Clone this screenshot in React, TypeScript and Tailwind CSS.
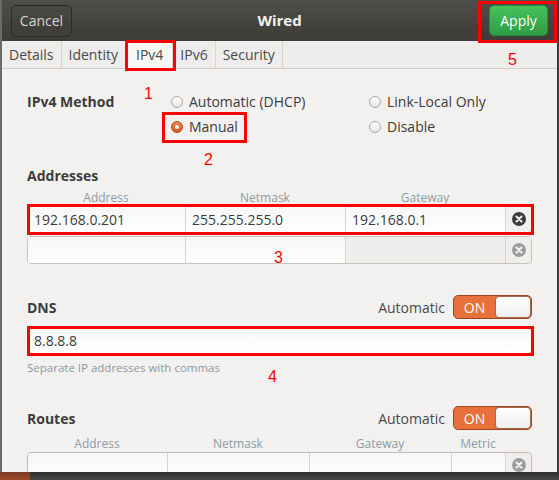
import type { ReactNode } from "react";

const font = { fontFamily: '"Open Sans", "Noto Sans", sans-serif' };

function Radio({ checked, label }: { checked?: boolean; label: string }) {
	return (
		<div className="flex items-center gap-[6px] h-[25px]">
			{checked ? (
				<span className="w-[12px] h-[12px] rounded-full border border-[#b14d1f] bg-gradient-to-b from-[#f0874e] to-[#d6541d] flex items-center justify-center">
					<span className="w-[4px] h-[4px] rounded-full bg-white" />
				</span>
			) : (
				<span className="w-[12px] h-[12px] rounded-full border border-[#aaa6a2] bg-gradient-to-b from-white to-[#e8e7e5]" />
			)}
			<span className="text-[14px] text-[#3c3c3c]">{label}</span>
		</div>
	);
}

function Switch() {
	return (
		<div className="flex items-center gap-[8px]">
			<span className="text-[14px] text-[#4a4a4a]">Automatic</span>
			<div className="w-[79px] h-[24px] rounded-[5px] border border-[#9c4620] bg-[#e8703a] flex overflow-hidden">
				<div className="w-[41px] flex items-center justify-center text-[14px] text-white">ON</div>
				<div className="flex-1 rounded-[4px] border border-[#a46a50] bg-gradient-to-b from-white to-[#eeeeec]" />
			</div>
		</div>
	);
}

function XIcon({ dim }: { dim?: boolean }) {
	return (
		<svg width="14" height="14" viewBox="0 0 14 14">
			<circle cx="7" cy="7" r="7" fill={dim ? "#9d9d9b" : "#3b3b3b"} />
			<path d="M4.5 4.5 L9.5 9.5 M9.5 4.5 L4.5 9.5" stroke="#f4f4f4" strokeWidth="2" strokeLinecap="round" />
		</svg>
	);
}

function Cell({ w, children, grey }: { w: string; children?: ReactNode; grey?: boolean }) {
	return (
		<div
			className={`${w} h-full border-r border-[#d6d2ce] flex items-center px-[6px] text-[14px] text-[#3c3c3c] ${
				grey ? "bg-[#efeeed]" : "bg-gradient-to-b from-[#f6f6f6] to-white"
			}`}
		>
			{children}
		</div>
	);
}

function Mark({ className, children }: { className: string; children?: ReactNode }) {
	return (
		<div
			className={`absolute text-[16px] leading-none text-[#ff0000] ${className}`}
			style={{ fontFamily: '"Liberation Sans", Arial, sans-serif' }}
		>
			{children}
		</div>
	);
}

export default function App() {
	const tabs = ["Details", "Identity", "IPv4", "IPv6", "Security"];

	return (
		<div className="relative w-[559px] h-[480px] overflow-hidden bg-[#3b3b3b] flex flex-col" style={font}>
			<div className="flex h-[472px]">
				<div className="w-[2px] bg-[#6b6b6b]" />
				<div className="w-[555px] flex flex-col bg-[#f2f1f0] overflow-hidden">
					{/* header bar */}
					<div className="h-[41px] shrink-0 grid grid-cols-[1fr_auto_1fr] items-center px-[9px] bg-gradient-to-b from-[#504e49] to-[#3c3b37]">
						<div>
							<button className="w-[61px] h-[32px] rounded-[5px] border border-[#2c2b28] bg-gradient-to-b from-[#4a4945] to-[#3d3c38] text-[14px] text-[#d8d5cf]">
								Cancel
							</button>
						</div>
						<div className="text-[15px] font-bold text-[#f2f1ef]">Wired</div>
						<div className="flex justify-end">
							<button className="w-[59px] h-[31px] rounded-[5px] border border-[#2b8a3c] bg-gradient-to-b from-[#46c25c] to-[#2f9d45] text-[14px] text-white">
								Apply
							</button>
						</div>
					</div>

					{/* tabs */}
					<div className="h-[28px] shrink-0 flex bg-[#eeedeb] border-b border-[#d2cdc8]">
						{tabs.map((t) => (
							<div
								key={t}
								className={`px-[7px] flex items-center text-[14px] text-[#4a4a4a] border-r border-[#d8d4d0] ${
									t === "IPv4" ? "bg-[#f7f7f6] border-l px-[9px]" : ""
								}`}
							>
								{t}
							</div>
						))}
					</div>

					<div className="px-[25px] flex flex-col">
						{/* method */}
						<div className="flex pt-[20px]">
							<div className="w-[144px] h-[25px] flex items-center text-[14px] font-bold text-[#3c3c3c]">IPv4 Method</div>
							<div className="grid grid-cols-[198px_auto]">
								<Radio label="Automatic (DHCP)" />
								<Radio label="Link-Local Only" />
								<Radio checked label="Manual" />
								<Radio label="Disable" />
							</div>
						</div>

						{/* addresses */}
						<div className="mt-[26px] h-[20px] flex items-center text-[14px] font-bold text-[#3c3c3c]">Addresses</div>
						<div className="mt-[6px] h-[14px] flex items-center text-[12px] text-[#8d9ba6]">
							<div className="w-[158px] text-center">Address</div>
							<div className="w-[160px] text-center">Netmask</div>
							<div className="w-[160px] text-center">Gateway</div>
						</div>
						<div className="h-[28px] flex border border-[#bdb6ae] rounded-[4px] overflow-hidden">
							<Cell w="w-[158px]">192.168.0.201</Cell>
							<Cell w="w-[160px]">255.255.255.0</Cell>
							<Cell w="w-[160px]">192.168.0.1</Cell>
							<div className="flex-1 flex items-center justify-center bg-[#f1f0ef]">
								<XIcon />
							</div>
						</div>
						<div className="mt-[3px] h-[28px] flex border border-[#c9c3bd] rounded-[4px] overflow-hidden">
							<Cell w="w-[158px]" />
							<Cell w="w-[160px]" />
							<Cell w="w-[160px]" grey />
							<div className="flex-1 flex items-center justify-center bg-[#efeeed]">
								<XIcon dim />
							</div>
						</div>

						{/* dns */}
						<div className="mt-[31px] h-[24px] flex items-center justify-between">
							<span className="text-[14px] font-bold text-[#3c3c3c]">DNS</span>
							<Switch />
						</div>
						<div className="mt-[8px] h-[27px] flex items-center px-[6px] rounded-[4px] border border-[#c2bbb4] bg-gradient-to-b from-[#f6f6f6] to-white text-[14px] text-[#3c3c3c]">
							8.8.8.8
						</div>
						<div className="mt-[7px] h-[14px] flex items-center text-[11.5px] text-[#8a98a3]">
							Separate IP addresses with commas
						</div>

						{/* routes */}
						<div className="mt-[31px] h-[24px] flex items-center justify-between">
							<span className="text-[14px] font-bold text-[#3c3c3c]">Routes</span>
							<Switch />
						</div>
						<div className="mt-[7px] h-[14px] flex items-center text-[12px] text-[#8d9ba6]">
							<div className="w-[140px] text-center">Address</div>
							<div className="w-[142px] text-center">Netmask</div>
							<div className="w-[142px] text-center">Gateway</div>
							<div className="w-[54px] text-center">Metric</div>
						</div>
						<div className="mt-[1px] h-[28px] shrink-0 flex border border-[#c2bbb4] rounded-[4px] overflow-hidden">
							<Cell w="w-[140px]" />
							<Cell w="w-[142px]" />
							<Cell w="w-[142px]" />
							<Cell w="w-[54px]" />
							<div className="flex-1 flex items-start pt-[5px] justify-center bg-[#efeeed]">
								<XIcon dim />
							</div>
						</div>
					</div>
				</div>
				<div className="flex-1 bg-[#3a3a3a]" />
			</div>
			<div className="flex flex-1">
				<div className="w-[30px] bg-gradient-to-b from-[#7d3b24] to-[#9a4a2c]" />
				<div className="flex-1 bg-gradient-to-b from-[#2e2e2e] to-[#4a4a4a]" />
			</div>

			{/* red annotations */}
			<div className="absolute left-[478px] top-[1px] w-[79px] h-[42px] border-[3px] border-[#ff0000]" />
			<div className="absolute left-[125px] top-[40px] w-[51px] h-[31px] border-[3px] border-[#ff0000]" />
			<div className="absolute left-[162px] top-[112px] w-[85px] h-[31px] border-[3px] border-[#ff0000]" />
			<div className="absolute left-[27px] top-[204px] w-[507px] h-[31px] border-[3px] border-[#ff0000]" />
			<div className="absolute left-[27px] top-[326px] w-[507px] h-[30px] border-[3px] border-[#ff0000]" />
			<Mark className="left-[144px] top-[86px]">1</Mark>
			<Mark className="left-[204px] top-[152px]">2</Mark>
			<Mark className="left-[274px] top-[250px]">3</Mark>
			<Mark className="left-[268px] top-[369px]">4</Mark>
			<Mark className="left-[508px] top-[52px]">5</Mark>
		</div>
	);
}
